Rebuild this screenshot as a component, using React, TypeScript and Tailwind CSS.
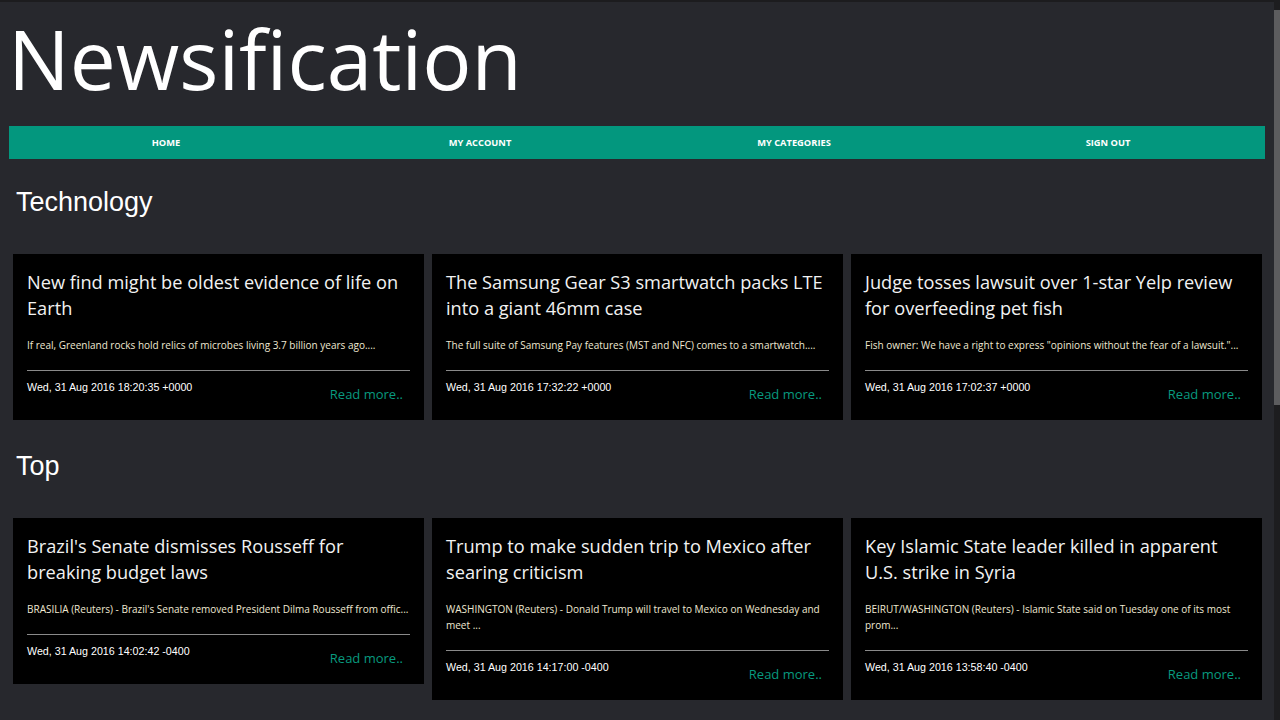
import React from "react";

type Article = {
  title: string;
  description: string;
  date: string;
};

const technology: Article[] = [
  {
    title: "New find might be oldest evidence of life on Earth",
    description: "If real, Greenland rocks hold relics of microbes living 3.7 billion years ago....",
    date: "Wed, 31 Aug 2016 18:20:35 +0000",
  },
  {
    title: "The Samsung Gear S3 smartwatch packs LTE into a giant 46mm case",
    description: "The full suite of Samsung Pay features (MST and NFC) comes to a smartwatch....",
    date: "Wed, 31 Aug 2016 17:32:22 +0000",
  },
  {
    title: "Judge tosses lawsuit over 1-star Yelp review for overfeeding pet fish",
    description: 'Fish owner: We have a right to express "opinions without the fear of a lawsuit."...',
    date: "Wed, 31 Aug 2016 17:02:37 +0000",
  },
];

const top: Article[] = [
  {
    title: "Brazil's Senate dismisses Rousseff for breaking budget laws",
    description: "BRASILIA (Reuters) - Brazil's Senate removed President Dilma Rousseff from offic...",
    date: "Wed, 31 Aug 2016 14:02:42 -0400",
  },
  {
    title: "Trump to make sudden trip to Mexico after searing criticism",
    description: "WASHINGTON (Reuters) - Donald Trump will travel to Mexico on Wednesday and meet ...",
    date: "Wed, 31 Aug 2016 14:17:00 -0400",
  },
  {
    title: "Key Islamic State leader killed in apparent U.S. strike in Syria",
    description: "BEIRUT/WASHINGTON (Reuters) - Islamic State said on Tuesday one of its most prom...",
    date: "Wed, 31 Aug 2016 13:58:40 -0400",
  },
];

const navItems = ["Home", "My Account", "My Categories", "Sign Out"];

function ArticleCard({ article }: { article: Article }) {
  return (
    <div className="bg-black px-[14px] pt-[15px] pb-[16px]">
      <h3 className="text-[18.2px] leading-[26px] text-[#f2f2f2] font-['Open_Sans',sans-serif]">{article.title}</h3>
      <p className="mt-[16px] text-[10px] leading-[16px] text-[#efe8d2] font-['Open_Sans',sans-serif]">
        {article.description}
      </p>
      <div className="mt-[17px] h-px bg-[#8a8a8a]" />
      <div className="flex items-start justify-between">
        <span className="mt-[8px] text-[10.7px] leading-[16px] text-white font-['Liberation_Sans',Arial,sans-serif]">
          {article.date}
        </span>
        <a className="mt-[13px] mr-[7px] text-[13px] leading-[20px] text-[#089a7f] font-['Open_Sans',sans-serif]">
          Read more..
        </a>
      </div>
    </div>
  );
}

function Section({ name, articles }: { name: string; articles: Article[] }) {
  return (
    <section className="flex flex-col">
      <h2 className="pl-[3px] text-[27px] leading-[30px] text-white font-['Liberation_Sans',Arial,sans-serif]">{name}</h2>
      <div className="mt-[37px] grid grid-cols-3 items-start gap-x-[8px]">
        {articles.map((a) => (
          <ArticleCard key={a.title} article={a} />
        ))}
      </div>
    </section>
  );
}

export default function App() {
  return (
    <div className="flex h-[720px] w-full overflow-hidden bg-[#27282d]">
      <main className="flex min-w-0 flex-1 flex-col">
        <div className="h-[2px] bg-[#1c1c1e]" />
        <h1 className="pl-[8px] pt-[6px] text-[82px] leading-[100px] text-white font-['Open_Sans',sans-serif]">
          Newsification
        </h1>
        <nav className="mx-[9px] mt-[18px] grid h-[33px] grid-cols-4 items-center bg-[#03977e]">
          {navItems.map((item) => (
            <a
              key={item}
              className="text-center text-[9.3px] font-bold uppercase text-white font-['Open_Sans',sans-serif]"
            >
              {item}
            </a>
          ))}
        </nav>
        <div className="mt-[28px] flex flex-col gap-[31px] pl-[13px] pr-[12px]">
          <Section name="Technology" articles={technology} />
          <Section name="Top" articles={top} />
        </div>
      </main>
      <div className="flex w-[6px] flex-col bg-[#1d1d1f]">
        <div className="mt-[10px] h-[395px] bg-[#5c5c5e]" />
      </div>
    </div>
  );
}
